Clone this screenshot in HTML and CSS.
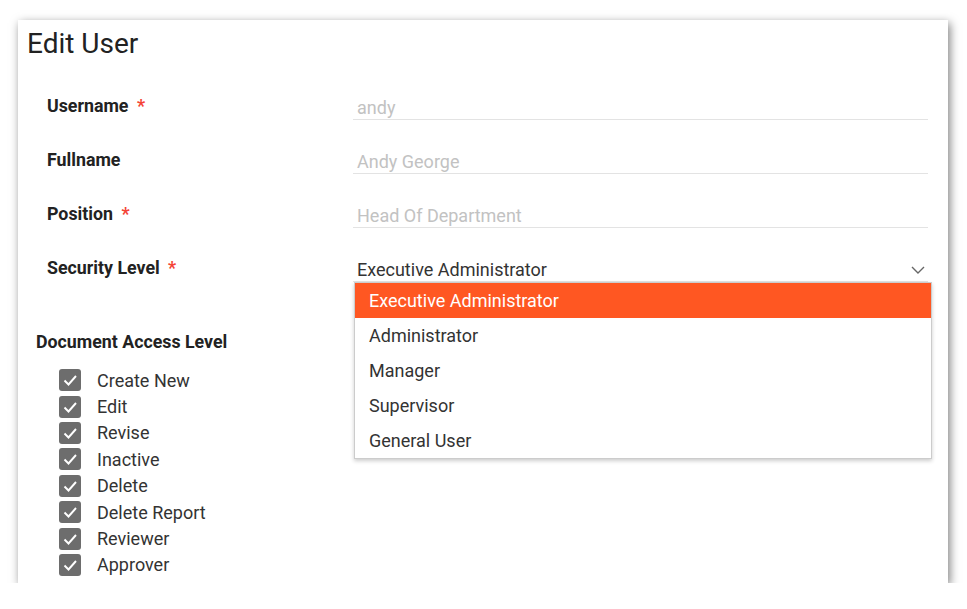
FILE: index.html
```html
<!DOCTYPE html>
<html>
<head>
    <title>Edit User</title>
    <link rel="stylesheet" href="styles.css">
</head>
<body>
    <div class="card">
        <h1 class="title">Edit User</h1>

        <div class="form-row">
            <label class="label">Username <span class="req">*</span></label>
            <div class="field">andy</div>
        </div>
        <div class="form-row">
            <label class="label">Fullname</label>
            <div class="field">Andy George</div>
        </div>
        <div class="form-row">
            <label class="label">Position <span class="req">*</span></label>
            <div class="field">Head Of Department</div>
        </div>
        <div class="form-row">
            <label class="label">Security Level <span class="req">*</span></label>
            <div class="field select">
                <span>Executive Administrator</span>
                <svg class="chevron" width="14" height="8" viewBox="0 0 14 8">
                    <path d="M1 1 L7 7 L13 1" fill="none" stroke="#666" stroke-width="1.4"/>
                </svg>
                <ul class="menu">
                    <li class="active">Executive Administrator</li>
                    <li>Administrator</li>
                    <li>Manager</li>
                    <li>Supervisor</li>
                    <li>General User</li>
                </ul>
            </div>
        </div>

        <h2 class="section">Document Access Level</h2>
        <ul class="checks">
            <li><span class="box"><svg width="22" height="22" viewBox="0 0 22 22"><path d="M5.5 11.5 L9.5 15.5 L17 7" fill="none" stroke="#fff" stroke-width="1.9"/></svg></span>Create New</li>
            <li><span class="box"><svg width="22" height="22" viewBox="0 0 22 22"><path d="M5.5 11.5 L9.5 15.5 L17 7" fill="none" stroke="#fff" stroke-width="1.9"/></svg></span>Edit</li>
            <li><span class="box"><svg width="22" height="22" viewBox="0 0 22 22"><path d="M5.5 11.5 L9.5 15.5 L17 7" fill="none" stroke="#fff" stroke-width="1.9"/></svg></span>Revise</li>
            <li><span class="box"><svg width="22" height="22" viewBox="0 0 22 22"><path d="M5.5 11.5 L9.5 15.5 L17 7" fill="none" stroke="#fff" stroke-width="1.9"/></svg></span>Inactive</li>
            <li><span class="box"><svg width="22" height="22" viewBox="0 0 22 22"><path d="M5.5 11.5 L9.5 15.5 L17 7" fill="none" stroke="#fff" stroke-width="1.9"/></svg></span>Delete</li>
            <li><span class="box"><svg width="22" height="22" viewBox="0 0 22 22"><path d="M5.5 11.5 L9.5 15.5 L17 7" fill="none" stroke="#fff" stroke-width="1.9"/></svg></span>Delete Report</li>
            <li><span class="box"><svg width="22" height="22" viewBox="0 0 22 22"><path d="M5.5 11.5 L9.5 15.5 L17 7" fill="none" stroke="#fff" stroke-width="1.9"/></svg></span>Reviewer</li>
            <li><span class="box"><svg width="22" height="22" viewBox="0 0 22 22"><path d="M5.5 11.5 L9.5 15.5 L17 7" fill="none" stroke="#fff" stroke-width="1.9"/></svg></span>Approver</li>
        </ul>
    </div>
</body>
</html>
```

FILE: styles.css
```css
body {
    margin: 0;
    background-color: #ffffff;
    font-family: Roboto, "Liberation Sans", Arial, sans-serif;
    color: #333333;
}

.card {
    box-sizing: border-box;
    width: 930px;
    height: 563px;
    margin: 20px 0 0 18px;
    padding: 9px 20px 0 9px;
    background-color: #ffffff;
    box-shadow: 2px 3px 9px rgba(0, 0, 0, 0.5);
}

.title {
    margin: 0 0 39px 0;
    font-size: 28px;
    font-weight: 400;
    line-height: 30px;
    color: #222222;
}

.form-row {
    display: flex;
    align-items: flex-start;
    height: 54px;
}

.label {
    width: 306px;
    margin: -2px 0 0 20px;
    font-size: 17.8px;
    font-weight: 700;
    line-height: 20px;
    color: #222222;
}

.req {
    color: #f44336;
    margin-left: 4px;
}

.field {
    position: relative;
    flex: 1;
    padding: 0 0 1px 4px;
    font-size: 18px;
    line-height: 20px;
    color: #c2c2c2;
    border-bottom: 1px solid #e3e3e3;
}

.select {
    display: flex;
    justify-content: space-between;
    align-items: center;
    color: #333333;
}

.chevron {
    margin-right: 3px;
}

.menu {
    position: absolute;
    left: 1px;
    top: 22px;
    width: 576px;
    margin: 0;
    padding: 0;
    list-style: none;
    background-color: #ffffff;
    border: 1px solid #cccccc;
    box-shadow: 0 2px 4px rgba(0, 0, 0, 0.2);
    z-index: 2;
}

.menu li {
    height: 35px;
    line-height: 35px;
    padding-left: 14px;
    font-size: 18px;
    color: #333333;
}

.menu li.active {
    background-color: #ff5722;
    color: #ffffff;
}

.section {
    margin: 18px 0 0 9px;
    font-size: 17.8px;
    font-weight: 700;
    line-height: 20px;
    color: #222222;
}

.checks {
    margin: 15px 0 0 32px;
    padding: 0;
    list-style: none;
}

.checks li {
    display: flex;
    align-items: center;
    height: 26.4px;
    font-size: 18px;
    color: #333333;
}

.box {
    width: 22px;
    height: 22px;
    margin-right: 16px;
    border-radius: 3px;
    background-color: #6d6d6d;
}

.box svg {
    display: block;
}
```
